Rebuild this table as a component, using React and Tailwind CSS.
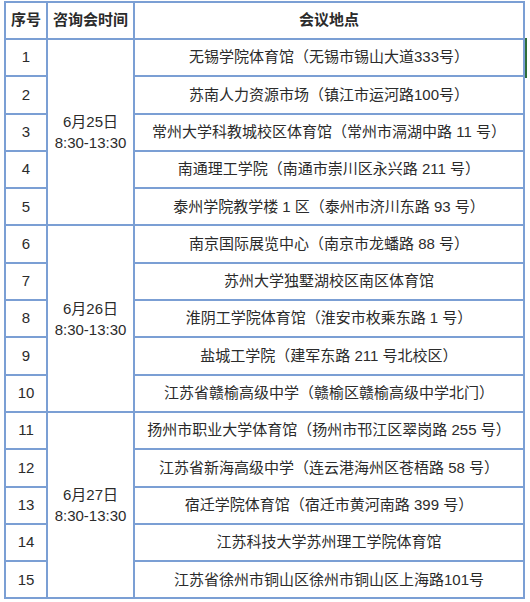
const groups = [
  {
    date: "6月25日",
    rows: [
      [1, "无锡学院体育馆（无锡市锡山大道333号）"],
      [2, "苏南人力资源市场（镇江市运河路100号）"],
      [3, "常州大学科教城校区体育馆（常州市滆湖中路 11 号）"],
      [4, "南通理工学院（南通市崇川区永兴路 211 号）"],
      [5, "泰州学院教学楼 1 区（泰州市济川东路 93 号）"],
    ],
  },
  {
    date: "6月26日",
    rows: [
      [6, "南京国际展览中心（南京市龙蟠路 88 号）"],
      [7, "苏州大学独墅湖校区南区体育馆"],
      [8, "淮阴工学院体育馆（淮安市枚乘东路 1 号）"],
      [9, "盐城工学院（建军东路 211 号北校区）"],
      [10, "江苏省赣榆高级中学（赣榆区赣榆高级中学北门）"],
    ],
  },
  {
    date: "6月27日",
    rows: [
      [11, "扬州市职业大学体育馆（扬州市邗江区翠岗路 255 号）"],
      [12, "江苏省新海高级中学（连云港海州区苍梧路 58 号）"],
      [13, "宿迁学院体育馆（宿迁市黄河南路 399 号）"],
      [14, "江苏科技大学苏州理工学院体育馆"],
      [15, "江苏省徐州市铜山区徐州市铜山区上海路101号"],
    ],
  },
]

const cell = "border-2 border-[#7b9fd4] text-center align-middle p-0"

export default function App() {
  return (
    <div className="relative w-[530px] h-[602px] bg-white pl-[4px] pt-[1px] text-[15px] text-[#2b2b2b] font-['Liberation_Sans','Noto_Sans_CJK_SC',sans-serif]">
      <table className="border-collapse table-fixed w-[521px]">
        <colgroup>
          <col className="w-[42px]" />
          <col className="w-[87px]" />
          <col />
        </colgroup>
        <thead>
          <tr className="h-[37px]">
            <th className={`${cell} font-bold`}>序号</th>
            <th className={`${cell} font-bold`}>咨询会时间</th>
            <th className={`${cell} font-bold`}>会议地点</th>
          </tr>
        </thead>
        <tbody>
          {groups.map((g) =>
            g.rows.map(([num, place], i) => (
              <tr key={num} className="h-[37.3px]">
                <td className={cell}>{num}</td>
                {i === 0 && (
                  <td className={`${cell} leading-[21px]`} rowSpan={5}>
                    {g.date}
                    <br />
                    8:30-13:30
                  </td>
                )}
                <td className={`${cell} whitespace-nowrap`}>{place}</td>
              </tr>
            ))
          )}
        </tbody>
      </table>
      {/* green edge marker beside first row */}
      <div className="absolute left-[525px] top-[38px] w-[2px] h-[40px] bg-[#2f6e3a]" />
    </div>
  )
}
